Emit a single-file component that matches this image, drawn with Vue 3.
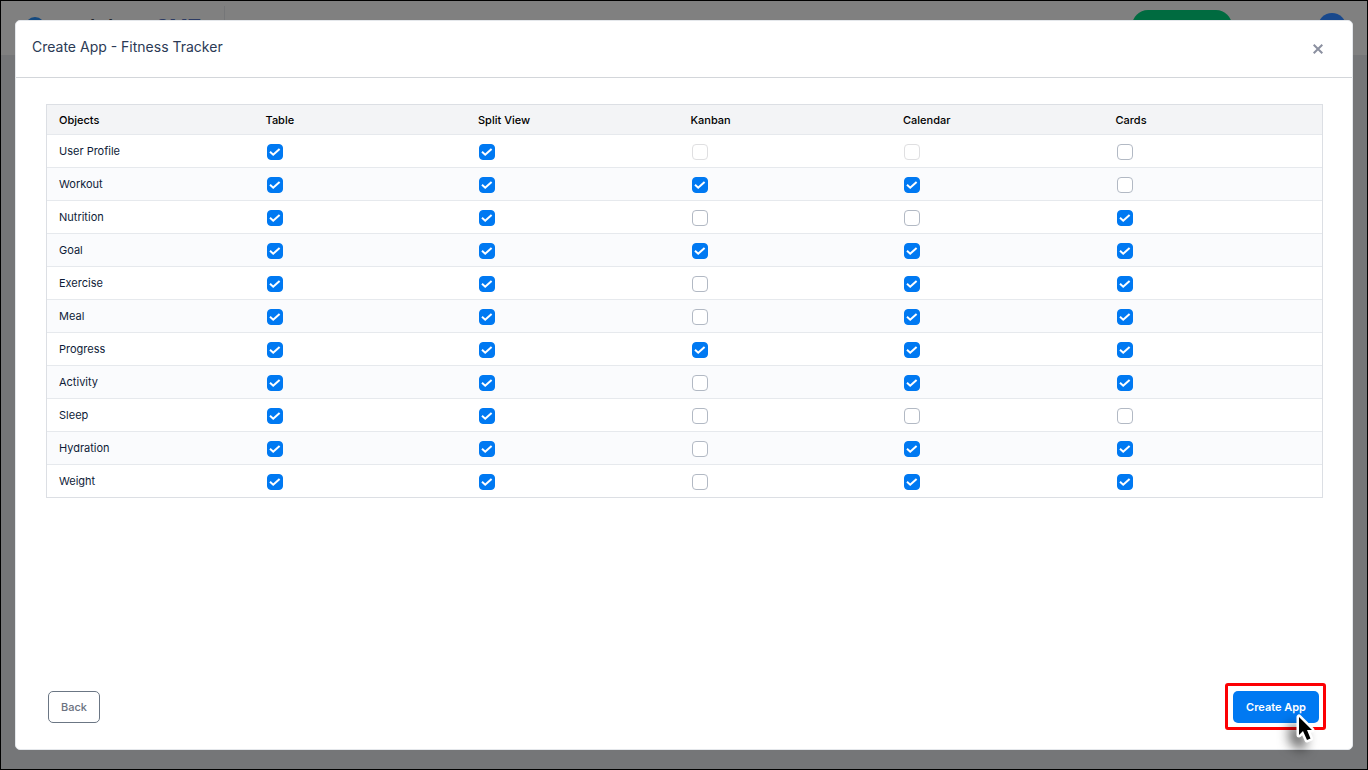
<script setup>
import { reactive } from 'vue'

const views = ['Table', 'Split View', 'Kanban', 'Calendar', 'Cards']

// One digit per view: 1 ticked, 0 unticked, x unavailable
const rows = reactive(
  [
    ['User Profile', '11xx0'],
    ['Workout', '11110'],
    ['Nutrition', '11001'],
    ['Goal', '11111'],
    ['Exercise', '11011'],
    ['Meal', '11011'],
    ['Progress', '11111'],
    ['Activity', '11011'],
    ['Sleep', '11000'],
    ['Hydration', '11011'],
    ['Weight', '11011'],
  ].map(([name, flags]) => ({
    name,
    cells: [...flags].map((f) => ({ on: f === '1', disabled: f === 'x' })),
  })),
)
</script>

<template>
  <div class="screen">
    <header class="topbar">
      <div class="brand">
        <span class="mark"></span>
        <span class="word">workdone <b>CMT</b></span>
      </div>
      <div class="tools">
        <span class="pill"></span>
        <span class="avatar"></span>
      </div>
    </header>
    <div class="overlay">
      <section class="modal" role="dialog" aria-labelledby="dialog-title">
        <div class="head">
          <h1 id="dialog-title">Create App - Fitness Tracker</h1>
          <button class="close" type="button" aria-label="Close">
            <svg width="10" height="10" viewBox="0 0 10 10"><path d="M0.7 0.7L9.3 9.3M9.3 0.7L0.7 9.3" /></svg>
          </button>
        </div>
        <div class="body">
          <table>
            <thead>
              <tr>
                <th scope="col">Objects</th>
                <th v-for="v in views" :key="v" scope="col">{{ v }}</th>
              </tr>
            </thead>
            <tbody>
              <tr v-for="row in rows" :key="row.name">
                <th scope="row">{{ row.name }}</th>
                <td v-for="(cell, i) in row.cells" :key="i">
                  <label class="check">
                    <input
                      v-model="cell.on"
                      type="checkbox"
                      :disabled="cell.disabled"
                      :aria-label="`${row.name}: ${views[i]}`"
                    />
                    <svg v-if="cell.on" width="16" height="16" viewBox="0 0 16 16">
                      <path d="M3 7.8L6.2 10.7L12.6 4.9" />
                    </svg>
                  </label>
                </td>
              </tr>
            </tbody>
          </table>
        </div>
        <div class="foot">
          <button class="back" type="button">Back</button>
          <div class="focus-frame">
            <button class="create" type="button">Create App</button>
            <svg class="pointer" width="36" height="44" viewBox="0 0 36 44">
              <path class="halo" d="M12 7V25L16 21L20 30L23.5 28.5L20 20H25Z" />
              <path class="arrow" d="M12 7V25L16 21L20 30L23.5 28.5L20 20H25Z" />
            </svg>
          </div>
        </div>
      </section>
    </div>
  </div>
</template>

<style>
body {
  background: #757678;
}
</style>

<style scoped>
* {
  box-sizing: border-box;
}
.screen {
  position: relative;
  min-height: 100vh;
  border: 1px solid #000;
  background: #757678;
  font-family: Inter, "Liberation Sans", sans-serif;
  font-size: 11px;
  color: #0e1c38;
}
.topbar {
  display: flex;
  justify-content: space-between;
  height: 54px;
  background: #808080;
}
.brand {
  display: flex;
  gap: 8px;
  width: 224px;
  padding: 16px 0 0 24px;
}
.brand::after {
  content: "";
  height: 34px;
  margin: -11px 0 0 auto;
  border-right: 1px solid #757678;
}
.mark {
  flex: none;
  width: 20px;
  height: 20px;
  border-radius: 50%;
  background: #14497f;
}
.word {
  font-size: 20px;
  line-height: 20px;
  font-weight: 600;
  white-space: nowrap;
  color: #23272e;
}
.word b {
  font-weight: 600;
  color: #2b3a63;
}
.tools {
  display: flex;
  gap: 86px;
  padding: 9px 21px 0 0;
}
.pill {
  width: 100px;
  height: 32px;
  border-radius: 16px;
  background: #006b40;
}
.avatar {
  width: 28px;
  height: 28px;
  margin-top: 3px;
  border-radius: 50%;
  background: #18488c;
}
.overlay {
  position: absolute;
  inset: 0;
  display: flex;
  padding: 19px 14px;
}
.modal {
  display: flex;
  flex: 1;
  flex-direction: column;
  border: 1px solid #e4e7eb;
  border-radius: 5px;
  background: #fff;
}
.head {
  display: flex;
  justify-content: space-between;
  align-items: flex-start;
  height: 57px;
  padding: 16px 29px 0 16px;
  border-bottom: 1px solid #d3d6da;
}
h1 {
  margin: 0;
  font-size: 14px;
  line-height: 20px;
  font-weight: 400;
  color: #2b3a55;
}
button {
  font: inherit;
  cursor: pointer;
}
.close {
  display: flex;
  padding: 0;
  margin-top: 7px;
  border: 0;
  background: none;
}
.close path {
  fill: none;
  stroke: #8b90a0;
  stroke-width: 2;
}
.body {
  flex: 1;
  padding: 26px 29px 0 30px;
}
table {
  width: 100%;
  table-layout: fixed;
  border: 1px solid #dcdfe4;
  border-spacing: 0;
}
th,
td {
  padding: 0 7px;
  text-align: left;
  font-weight: 400;
  font-size: 11px;
}
thead th {
  height: 30px;
  padding-left: 6px;
  border-bottom: 1px solid #e6e9ed;
  background: #f3f4f6;
  font-weight: 500;
  color: #000;
}
th:first-child {
  padding-left: 12px;
}
tbody th,
tbody td {
  height: 33px;
  border-bottom: 1px solid #e6e9ed;
}
tbody tr:last-child > * {
  height: 32px;
  border-bottom: 0;
}
tbody tr:nth-child(even) {
  background: #fafbfd;
}
.check {
  position: relative;
  display: block;
  width: 16px;
  height: 16px;
  margin-top: 1px;
}
.check input {
  appearance: none;
  display: block;
  width: 16px;
  height: 16px;
  margin: 0;
  border: 1px solid #b2b9c4;
  border-radius: 4px;
  background: #fff;
}
.check input:checked {
  border-color: #0079f2;
  background: #0079f2;
}
.check input:disabled {
  border-color: #dfdfe1;
}
.check svg {
  position: absolute;
  inset: 0;
  pointer-events: none;
}
.check path {
  fill: none;
  stroke: #fff;
  stroke-width: 2;
}
.foot {
  display: flex;
  justify-content: space-between;
  align-items: center;
  padding: 0 26px 19px 32px;
}
.back,
.create {
  height: 32px;
  padding: 0 12px;
  border-radius: 5px;
  font-weight: 500;
}
.back {
  border: 1px solid #6b7684;
  background: #fff;
  color: #6b7280;
}
.create {
  display: block;
  padding: 0 13px;
  border: 0;
  background: #0079f2;
  color: #fff;
  font-weight: 600;
}
.focus-frame {
  position: relative;
  padding: 5px 4px 4px 5px;
  border: 3px solid #fc0004;
  border-radius: 3px;
}
.pointer {
  position: absolute;
  right: 0;
  bottom: -27px;
  overflow: visible;
  filter: drop-shadow(-7px 8px 6px rgba(0, 0, 0, 0.6));
  pointer-events: none;
}
.halo {
  fill: #fff;
  stroke: #fff;
  stroke-width: 5;
  stroke-linejoin: round;
}
.arrow {
  fill: #000;
}
</style>
